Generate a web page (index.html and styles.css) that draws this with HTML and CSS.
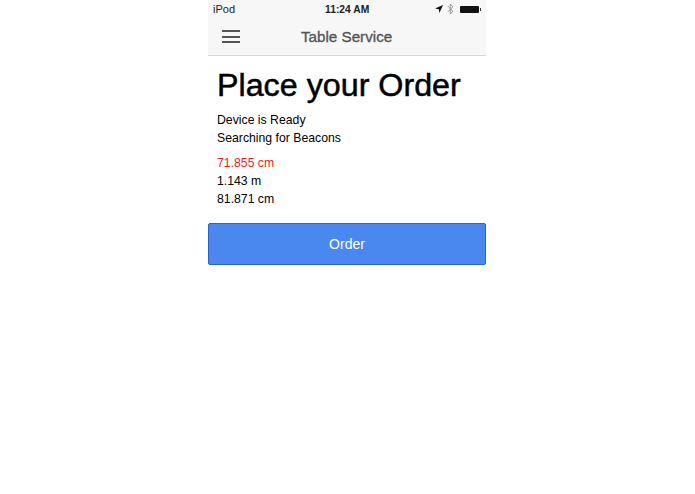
FILE: index.html
```html
<!DOCTYPE html>
<html lang="en">
<head>
<meta charset="utf-8">
<title>Table Service</title>
<link rel="stylesheet" href="styles.css">
</head>
<body>
<div class="phone">
  <header class="topbar">
    <div class="status">
      <span class="carrier">iPod</span>
      <span class="time">11:24 AM</span>
      <span class="status-icons">
        <svg class="ic-loc" width="8" height="8" viewBox="0 0 8 8"><path d="M8 0 L0 3.6 L3.8 4.2 L4.4 8 Z" fill="#111"/></svg>
        <svg class="ic-bt" width="7" height="12" viewBox="0 0 7 12"><path d="M1 3.2 L5.8 8.2 L3.3 11 V1 L5.8 3.8 L1 8.8" fill="none" stroke="#999" stroke-width="1"/></svg>
        <span class="battery"><span class="battery-cap"></span></span>
      </span>
    </div>
    <div class="navbar">
      <button class="menu" aria-label="Menu"><span></span><span></span><span></span></button>
      <span class="title">Table Service</span>
    </div>
  </header>
  <main class="content">
    <h1>Place your Order</h1>
    <p class="log">Device is Ready<br>Searching for Beacons</p>
    <ul class="beacons">
      <li class="near">71.855 cm</li>
      <li>1.143 m</li>
      <li>81.871 cm</li>
    </ul>
  </main>
  <button class="order">Order</button>
</div>
</body>
</html>
```
FILE: styles.css
```css
* { box-sizing: border-box; }
html, body { margin: 0; padding: 0; background: #fff; }
body { height: 494px; overflow: hidden; font-family: "Liberation Sans", Arial, sans-serif; color: #000; }
.phone { width: 278px; margin-left: 208px; }
.topbar { height: 56px; background: #f7f7f7; border-bottom: 1px solid #d6d6d6; }
.status { display: flex; align-items: center; justify-content: space-between; height: 18px; padding: 0 6px 0 5px; position: relative; font-size: 11px; color: #222; }
.time { position: absolute; left: 117px; font-weight: bold; font-size: 10.3px; }
.status-icons { display: flex; align-items: center; gap: 4px; }
.battery { display: block; position: relative; width: 19px; height: 7px; background: #111; border-radius: 1px; margin-right: 1px; margin-left: 2px; }
.battery-cap { position: absolute; right: -2px; top: 2px; width: 1.5px; height: 3px; background: #333; }
.navbar { display: flex; align-items: center; height: 37px; padding-left: 14px; position: relative; }
.menu { display: flex; flex-direction: column; justify-content: space-between; width: 18px; height: 13px; padding: 0; border: 0; background: none; }
.menu span { display: block; height: 2px; background: #555; }
.title { position: absolute; left: 93px; font-size: 15.2px; font-weight: normal; color: #555; -webkit-text-stroke: 0.35px #555; }
.content { padding: 0 9px; }
h1 { margin: 11px 0 0; font-size: 32.25px; line-height: 36px; font-weight: normal; -webkit-text-stroke: 0.5px #000; color: #000; }
.log { margin: 8px 0 0; font-size: 12.25px; line-height: 18px; }
.beacons { list-style: none; margin: 7px 0 0; padding: 0; font-size: 12.25px; line-height: 18px; }
.near { color: #ee1c25; }
.order { display: block; width: 278px; height: 42px; margin-top: 15px; background: #4a87ee; border: 1px solid #2a62c8; border-radius: 2px; color: #fff; font: 14px "Liberation Sans", Arial, sans-serif; }
```
